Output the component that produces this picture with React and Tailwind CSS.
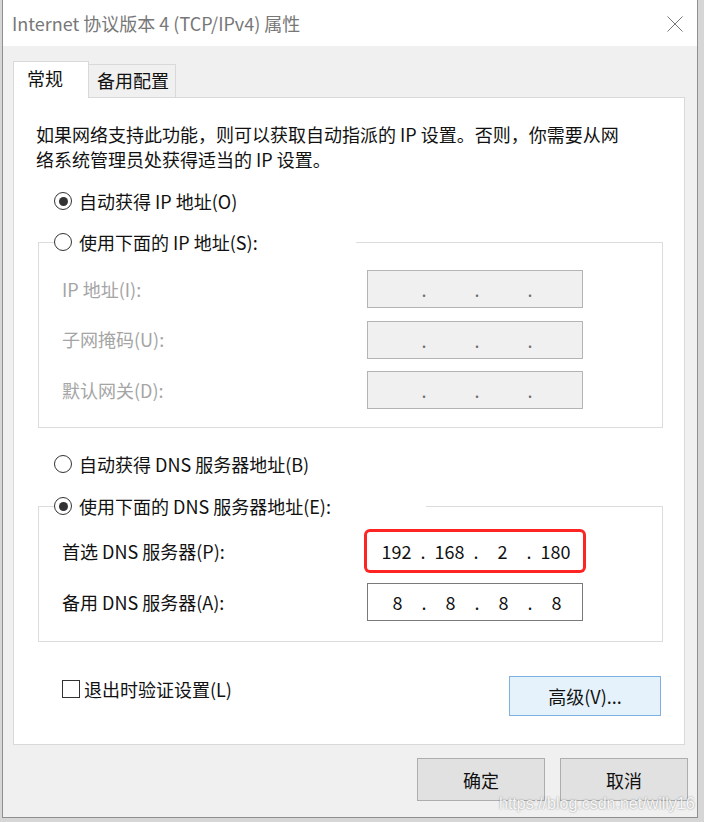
import { Fragment } from 'react'

const FONT = "font-['Noto_Sans_CJK_SC','Noto_Sans',sans-serif]"

function Radio({ checked }) {
  return (
    <span className="flex h-[18px] w-[18px] shrink-0 items-center justify-center rounded-full border border-[#333] bg-white">
      {checked && <span className="h-[9px] w-[9px] rounded-full bg-[#333]" />}
    </span>
  )
}

function RadioLabel({ checked, children }) {
  return (
    <div className="flex h-[25px] items-center gap-[7px] leading-[25px]">
      <Radio checked={checked} />
      <span>{children}</span>
    </div>
  )
}

function IpBox({ values, disabled, highlight }) {
  const box = disabled
    ? 'border border-[#b4b4b4] bg-[#f0f0f0] text-[#6d6d6d]'
    : highlight
      ? 'rounded-[3px] bg-white text-[#111] ring-[3px] ring-[#ff2424]'
      : 'border border-[#7a7a7a] bg-white text-[#111]'
  return (
    <div className={`flex h-[38px] w-[216px] shrink-0 items-center pl-[5.5px] text-[18px] leading-none ${box}`}>
      {[0, 1, 2, 3].map((i) => (
        <Fragment key={i}>
          <span className="w-[48px] text-center">{values ? values[i] : ''}</span>
          {i < 3 && <span className="w-[5px] text-center">.</span>}
        </Fragment>
      ))}
    </div>
  )
}

function FieldRow({ label, disabled, ...rest }) {
  return (
    <div className="flex items-center pl-[23px] pr-[79px]">
      <span className={`flex-1 ${disabled ? 'text-[#a5a5a5]' : 'text-[#111]'}`}>{label}</span>
      <IpBox disabled={disabled} {...rest} />
    </div>
  )
}

export default function App() {
  return (
    <div className={`relative h-[822px] w-[704px] overflow-hidden bg-[#d6d6d6] text-[18px] text-[#111] ${FONT}`}>
      <div className="ml-[2px] flex h-[818px] w-[696px] flex-col border-x border-b border-[#8f8f8f]">
        {/* title bar */}
        <div className="flex h-[46px] shrink-0 items-center justify-between bg-white pl-[9px] pr-[14px]">
          <span className="text-[18px] text-[#777]">Internet 协议版本 4 (TCP/IPv4) 属性</span>
          <svg width="16" height="16" viewBox="0 0 16 16" className="mt-[1px]">
            <path d="M0.5 0.5 L15.5 15.5 M15.5 0.5 L0.5 15.5" stroke="#777" strokeWidth="1" />
          </svg>
        </div>

        {/* body */}
        <div className="flex flex-1 flex-col bg-[#f0f0f0] pl-[10px] pr-[12px] pt-[15px]">
          <div className="flex items-end">
            <div className="relative z-10 -mb-px h-[37px] w-[76px] border border-b-0 border-[#d9d9d9] bg-white pl-[13px] pt-[4px] leading-[25px]">
              常规
            </div>
            <div className="h-[33px] w-[87px] border border-b-0 border-l-0 border-[#d9d9d9] bg-[#f0f0f0] pl-[8px] pt-[3px] leading-[25px]">
              备用配置
            </div>
          </div>

          <div className="h-[648px] border border-[#d9d9d9] bg-white pl-[24px] pr-[21px] pt-[24px]">
            <p className="-ml-[2px] leading-[25px]">
              如果网络支持此功能，则可以获取自动指派的 IP 设置。否则，你需要从网
              <br />
              络系统管理员处获得适当的 IP 设置。
            </p>

            <div className="mt-[16.5px] pl-[16px]">
              <RadioLabel checked>自动获得 IP 地址(O)</RadioLabel>
            </div>

            <fieldset className="mt-[16px] border border-[#dcdcdc] pb-[18px]">
              <legend className="ml-[15px] w-[302px]">
                <RadioLabel>使用下面的 IP 地址(S):</RadioLabel>
              </legend>
              <div className="flex flex-col gap-[12.5px] pt-[15.5px]">
                <FieldRow label="IP 地址(I):" disabled />
                <FieldRow label="子网掩码(U):" disabled />
                <FieldRow label="默认网关(D):" disabled />
              </div>
            </fieldset>

            <div className="mt-[23.5px] pl-[16px]">
              <RadioLabel>自动获得 DNS 服务器地址(B)</RadioLabel>
            </div>

            <fieldset className="mt-[17px] border border-[#dcdcdc] pb-[20px]">
              <legend className="ml-[15px] w-[372px]">
                <RadioLabel checked>使用下面的 DNS 服务器地址(E):</RadioLabel>
              </legend>
              <div className="flex flex-col gap-[13px] pt-[13.5px]">
                <FieldRow label="首选 DNS 服务器(P):" values={['192', '168', '2', '180']} highlight />
                <FieldRow label="备用 DNS 服务器(A):" values={['8', '8', '8', '8']} />
              </div>
            </fieldset>

            <div className="mt-[34px] flex items-start justify-between pl-[24px] pr-[2px]">
              <label className="mt-[0.5px] flex h-[25px] items-center gap-[4px] leading-[25px]">
                <span className="h-[18px] w-[18px] border border-[#333] bg-white" />
                <span>退出时验证设置(L)</span>
              </label>
              <button className="h-[40px] w-[152px] border border-[#7eb0e0] bg-[#e5f1fb] leading-none text-[#111]">
                高级(V)...
              </button>
            </div>
          </div>

          <div className="-mr-[3px] mt-[13px] flex justify-end gap-[15px]">
            <button className="h-[43px] w-[128px] border border-[#adadad] bg-[#e1e1e1] leading-none text-[#111]">确定</button>
            <button className="h-[43px] w-[128px] border border-[#adadad] bg-[#e1e1e1] leading-none text-[#111]">取消</button>
          </div>
        </div>
      </div>

      {/* watermark over the dialog */}
      <span className="absolute left-[499px] top-[792px] font-['Liberation_Sans',Arial,sans-serif] text-[16px] text-white/90 [text-shadow:0_0_2px_rgba(0,0,0,0.45)]">
        https://blog.csdn.net/willy16
      </span>
    </div>
  )
}
